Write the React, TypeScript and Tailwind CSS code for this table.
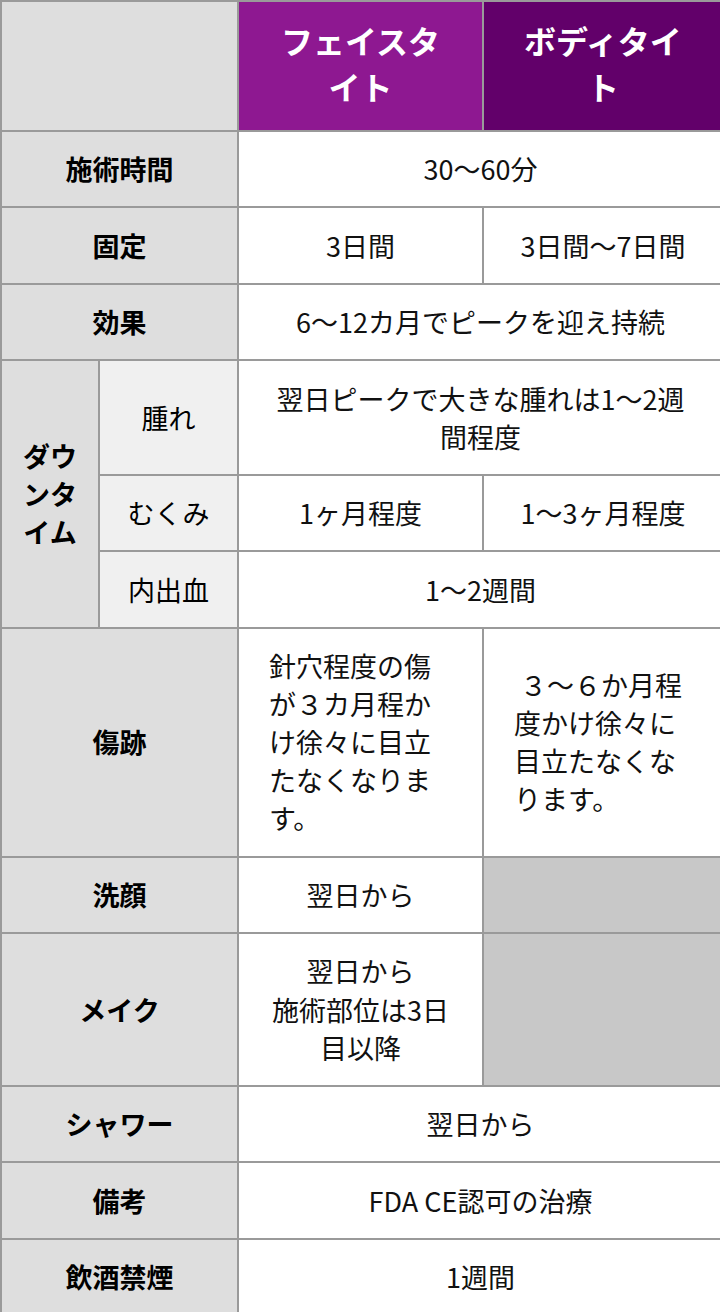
import React from "react";

const font = { fontFamily: '"Noto Sans CJK JP", "Noto Sans", sans-serif' };

const lab = "border-2 border-[#9a9a9a] bg-[#dedede] px-[20px] py-[18.2px] text-center align-middle text-[27px] font-bold leading-[38.1px] text-black";
const sub = "border-2 border-[#9a9a9a] bg-[#f0f0f0] px-[16px] py-[18.2px] text-center align-middle text-[27px] leading-[38.1px] text-black";
const val = "border-2 border-[#9a9a9a] bg-white px-[30px] py-[18.2px] text-center align-middle text-[27px] leading-[38.1px] text-[#111]";
const valL = "border-2 border-[#9a9a9a] bg-white px-[30px] py-[18.2px] text-left align-middle text-[27px] leading-[38.1px] text-[#111]";
const empty = "border-2 border-[#9a9a9a] bg-[#c8c8c8]";

export default function App() {
  return (
    <div className="w-[720px] overflow-hidden bg-white" style={font}>
      <table className="w-[722px] table-fixed border-collapse">
        <colgroup>
          <col className="w-[98px]" />
          <col className="w-[139px]" />
          <col className="w-[245px]" />
          <col className="w-[240px]" />
        </colgroup>
        <tbody>
          <tr>
            <th colSpan={2} className="border-2 border-[#9a9a9a] bg-[#dedede]"></th>
            <th className="border-2 border-[#9a9a9a] bg-[#8e1891] px-[30px] pt-[15px] pb-[21px] text-center align-middle text-[32px] font-bold leading-[46px] text-white">
              フェイスタイト
            </th>
            <th className="border-2 border-[#9a9a9a] bg-[#62006a] px-[30px] pt-[15px] pb-[21px] text-center align-middle text-[32px] font-bold leading-[46px] text-white">
              ボディタイト
            </th>
          </tr>
          <tr>
            <th colSpan={2} className={lab}>施術時間</th>
            <td colSpan={2} className={val}>30〜60分</td>
          </tr>
          <tr>
            <th colSpan={2} className={lab}>固定</th>
            <td className={val}>3日間</td>
            <td className={val}>3日間〜7日間</td>
          </tr>
          <tr>
            <th colSpan={2} className={lab}>効果</th>
            <td colSpan={2} className={val}>6〜12カ月でピークを迎え持続</td>
          </tr>
          <tr>
            <th rowSpan={3} className="border-2 border-[#9a9a9a] bg-[#dedede] px-[14px] py-[18.2px] text-center align-middle text-[27px] font-bold leading-[38.1px] text-black">
              ダウンタイム
            </th>
            <td className={sub}>腫れ</td>
            <td colSpan={2} className={val}>翌日ピークで大きな腫れは1〜2週間程度</td>
          </tr>
          <tr>
            <td className={sub}>むくみ</td>
            <td className={val}>1ヶ月程度</td>
            <td className={val}>1〜3ヶ月程度</td>
          </tr>
          <tr>
            <td className={sub}>内出血</td>
            <td colSpan={2} className={val}>1〜2週間</td>
          </tr>
          <tr>
            <th colSpan={2} className={lab}>傷跡</th>
            <td className={valL}>針穴程度の傷が３カ月程かけ徐々に目立たなくなります。</td>
            <td className={valL}>&nbsp;３〜６か月程度かけ徐々に目立たなくなります。</td>
          </tr>
          <tr>
            <th colSpan={2} className={lab}>洗顔</th>
            <td className={val}>翌日から</td>
            <td className={empty}></td>
          </tr>
          <tr>
            <th colSpan={2} className={lab}>メイク</th>
            <td className={val}>
              翌日から
              <br />
              施術部位は3日目以降
            </td>
            <td className={empty}></td>
          </tr>
          <tr>
            <th colSpan={2} className={lab}>シャワー</th>
            <td colSpan={2} className={val}>翌日から</td>
          </tr>
          <tr>
            <th colSpan={2} className={lab}>備考</th>
            <td colSpan={2} className={val}>FDA CE認可の治療</td>
          </tr>
          <tr>
            <th colSpan={2} className={lab}>飲酒禁煙</th>
            <td colSpan={2} className={val}>1週間</td>
          </tr>
        </tbody>
      </table>
    </div>
  );
}
